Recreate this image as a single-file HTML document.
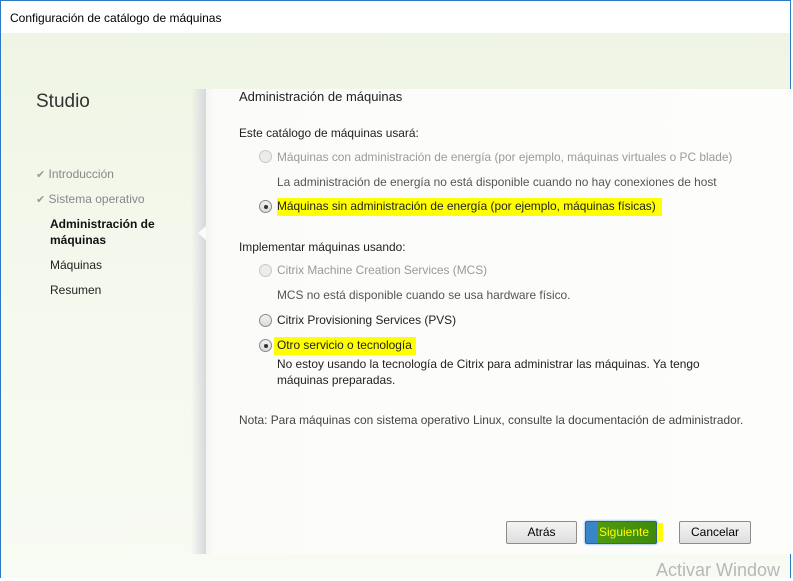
<!DOCTYPE html>
<html><head><meta charset="utf-8"><style>
*{margin:0;padding:0;box-sizing:border-box}
body{width:793px;height:578px;overflow:hidden;background:#fff;font-family:"Liberation Sans",sans-serif;font-size:11.9px;color:#222;position:relative}
.win{position:absolute;left:0;top:0;width:791px;height:578px;border:1px solid #2b79c2;border-bottom:none;background:linear-gradient(180deg,#eef4e3 0%,#f4f8ec 40%,#f8fbf3 100%)}
.title{position:absolute;left:0;top:0;width:100%;height:32px;background:#fff;font-size:12px;padding:10px 0 0 9px;color:#000}
.content{position:absolute;left:204px;top:88px;width:586px;height:465px;background:linear-gradient(90deg,#f2f5ee 0,#fbfcf9 10px,#fdfdfb 100%)}
.shadow{position:absolute;left:190px;top:88px;width:15px;height:465px;background:linear-gradient(90deg,rgba(255,255,255,0),#d5d8dc)}
.notch{position:absolute;left:197px;top:225px;width:0;height:0;border-top:7px solid transparent;border-bottom:7px solid transparent;border-right:8px solid #fbfcf9}
.t{position:absolute;white-space:nowrap}
.g{color:#9a9a9a}
.hl{background:#ffff00}
.r{position:absolute;width:13px;height:13px;border-radius:50%;border:1px solid #8a8a8a;background:linear-gradient(#f0f0f0,#dcdcdc)}
.r.d{border-color:#c8c8c8;background:#ececec}
.r.s::after{content:"";position:absolute;left:3.5px;top:3.5px;width:4px;height:4px;border-radius:50%;background:#333}
.btn{position:absolute;top:521px;height:23px;border:1px solid #8c8c8c;border-radius:2px;background:linear-gradient(#f4f4f4,#dedede);text-align:center;line-height:21px;font-size:12px;color:#000}
.chk{color:#999;font-size:11px}
.m{font-size:12px}
</style></head><body>
<div class="win">
<div class="title">Configuración de catálogo de máquinas</div>
<div class="content"></div>
<div class="shadow"></div>
<div class="notch"></div>
</div>
<div class="t" style="left:36px;top:91px;font-size:19px;color:#333">Studio</div>
<div class="t m" style="left:36px;top:167px;color:#888"><span class="chk">✔</span> Introducción</div>
<div class="t m" style="left:36px;top:192px;color:#888"><span class="chk">✔</span> Sistema operativo</div>
<div class="t m" style="left:50px;top:216px;font-weight:bold;line-height:16px;color:#111">Administración de<br>máquinas</div>
<div class="t m" style="left:50px;top:258px">Máquinas</div>
<div class="t m" style="left:50px;top:283px">Resumen</div>

<div class="t" style="left:239px;top:89px;font-size:13px;color:#222">Administración de máquinas</div>
<div class="t" style="left:239px;top:126px">Este catálogo de máquinas usará:</div>
<div class="r d" style="left:259px;top:150px"></div>
<div class="t g" style="left:277px;top:150px">Máquinas con administración de energía (por ejemplo, máquinas virtuales o PC blade)</div>
<div class="t" style="left:277px;top:175px;color:#555">La administración de energía no está disponible cuando no hay conexiones de host</div>
<div class="r s" style="left:259px;top:200px"></div>
<div class="t" style="left:277px;top:199px"><span class="hl" style="padding:1px 6px 3px 0">Máquinas sin administración de energía (por ejemplo, máquinas físicas)</span></div>
<div class="t" style="left:239px;top:240px">Implementar máquinas usando:</div>
<div class="r d" style="left:259px;top:264px"></div>
<div class="t g" style="left:277px;top:263px">Citrix Machine Creation Services (MCS)</div>
<div class="t" style="left:277px;top:288px;color:#555">MCS no está disponible cuando se usa hardware físico.</div>
<div class="r" style="left:259px;top:314px"></div>
<div class="t" style="left:277px;top:313px">Citrix Provisioning Services (PVS)</div>
<div class="r s" style="left:259px;top:339px"></div>
<div class="t" style="left:274px;top:338px"><span class="hl" style="padding:1px 4px 3px 3px">Otro servicio o tecnología</span></div>
<div class="t" style="left:277px;top:356px;line-height:16px">No estoy usando la tecnología de Citrix para administrar las máquinas. Ya tengo<br>máquinas preparadas.</div>
<div class="t" style="left:239px;top:413px;color:#444">Nota: Para máquinas con sistema operativo Linux, consulte la documentación de administrador.</div>

<div class="btn" style="left:506px;width:71px">Atrás</div>
<div class="btn" style="left:585px;width:72px;border-color:#2c628b;background:linear-gradient(90deg,#3a84c8 0,#3a84c8 12px,#4f9a10 12px,#3e8a0c 100%);color:#ffff00;box-shadow:0 0 2px #4a8fd6"><span style="margin-left:6px">Siguiente</span></div>
<div style="position:absolute;left:657px;top:523px;width:6px;height:19px;background:#ffff00"></div>
<div class="btn" style="left:679px;width:72px">Cancelar</div>
<div class="t" style="left:656px;top:560px;font-size:18px;color:#b8b8b8">Activar Window</div>
</body></html>
